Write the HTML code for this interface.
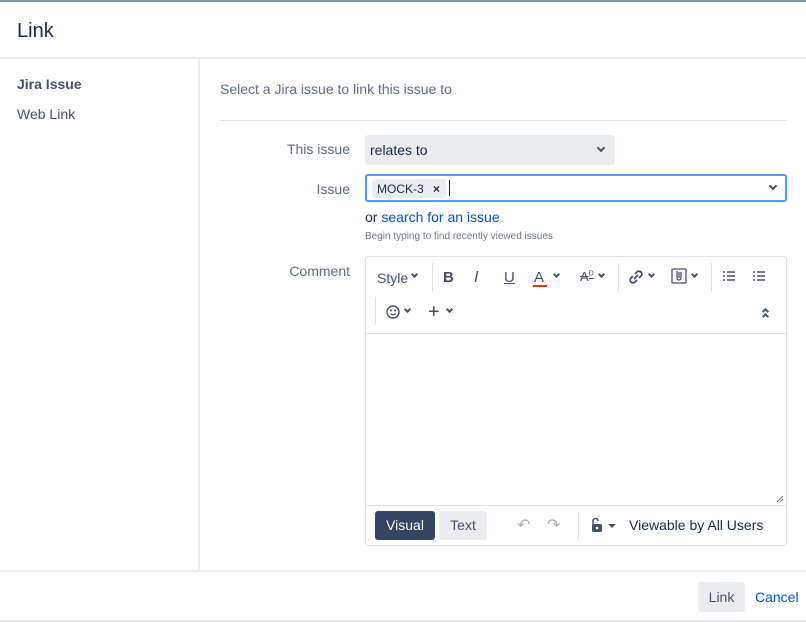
<!DOCTYPE html>
<html><head><meta charset="utf-8"><style>
*{box-sizing:border-box;margin:0;padding:0}
body{width:806px;height:622px;position:relative;background:#fff;font-family:"Liberation Sans",sans-serif;color:#172b4d;overflow:hidden}
.a{position:absolute}
.lbl{font-size:14px;color:#5e6c84;text-align:right;width:120px}
.ic{position:absolute;font-size:14px;color:#42526e;font-weight:bold}
.chev{display:inline-block;width:6px;height:6px;border-right:2px solid #42526e;border-bottom:2px solid #42526e;transform:rotate(45deg)}
</style></head><body>
<div class="a" style="left:0;top:0;width:806px;height:2px;background:#8993a4"></div>
<div class="a" style="left:17px;top:20px;font-size:20px;color:#172b4d">Link</div>
<div class="a" style="left:0;top:57px;width:806px;height:2px;background:#ebecf0"></div>
<div class="a" style="left:198px;top:59px;width:2px;height:512px;background:#ebecf0"></div>
<div class="a" style="left:17px;top:76px;font-size:14px;font-weight:bold;color:#42526e">Jira Issue</div>
<div class="a" style="left:17px;top:106px;font-size:14px;color:#42526e">Web Link</div>
<div class="a" style="left:220px;top:81px;font-size:14px;color:#5e6c84">Select a Jira issue to link this issue to</div>
<div class="a" style="left:220px;top:120px;width:567px;height:1px;background:#dfe1e6"></div>
<div class="a lbl" style="left:230px;top:141px">This issue</div>
<div class="a" style="left:365px;top:135px;width:250px;height:30px;background:#ebecf0;border-radius:3px;font-size:14px;padding:7px 5px">relates to<span class="chev" style="position:absolute;right:11px;top:10px"></span></div>
<div class="a lbl" style="left:230px;top:181px">Issue</div>
<div class="a" style="left:365px;top:174px;width:422px;height:28px;border:2px solid #4c9aff;border-radius:3px">
<div class="a" style="left:5px;top:3px;width:74px;height:19px;background:#ebecf0;border-radius:3px;font-size:12px;padding:3px 5px">MOCK-3 <span style="margin-left:6px;font-weight:bold">×</span></div>
<div class="a" style="left:82px;top:4px;width:1px;height:16px;background:#172b4d"></div>
<span class="chev" style="position:absolute;right:9px;top:7px"></span>
</div>
<div class="a" style="left:365px;top:209px;font-size:14px">or <span style="color:#0052cc">search for an issue</span></div>
<div class="a" style="left:365px;top:231px;font-size:10px;color:#6b778c">Begin typing to find recently viewed issues</div>
<div class="a lbl" style="left:230px;top:263px">Comment</div>
<div class="a" style="left:365px;top:256px;width:422px;height:290px;border:1px solid #dfe1e6;border-radius:3px">
<div class="a" style="left:0;top:76px;width:420px;height:1px;background:#dfe1e6"></div>
<div class="a" style="left:0;top:248px;width:420px;height:1px;background:#dfe1e6"></div>
<svg class="a" style="left:410px;top:238px" width="8" height="8"><path d="M1 7L7 1M4 7L7 4" stroke="#6b778c" stroke-width="1"/></svg>
<div class="a" style="left:11px;top:13px;font-size:14px;color:#42526e">Style</div><span class="chev a" style="left:46px;top:15px;width:5px;height:5px"></span>
<div class="a" style="left:66px;top:6px;width:1px;height:28px;background:#dfe1e6"></div>
<div class="ic" style="left:77px;top:12px;font-size:15px">B</div>
<div class="ic" style="left:108px;top:12px;font-style:italic;font-weight:normal;font-size:16px">I</div>
<div class="ic" style="left:138px;top:12px;text-decoration:underline;font-weight:normal;font-size:15px">U</div>
<div class="ic" style="left:168px;top:12px;font-weight:normal;font-size:15px">A</div><div class="a" style="left:167px;top:28px;width:14px;height:2px;background:#de350b"></div><span class="chev a" style="left:188px;top:15px;width:5px;height:5px"></span>
<div class="ic" style="left:214px;top:12px;font-weight:normal;font-size:13px;text-decoration:line-through">A<sup style="font-size:7px">D</sup></div><span class="chev a" style="left:233px;top:15px;width:5px;height:5px"></span>
<div class="a" style="left:252px;top:6px;width:1px;height:28px;background:#dfe1e6"></div>
<svg class="a" style="left:262px;top:13px" width="16" height="14" viewBox="0 0 16 14"><path d="M6 9l4-4M5 6L3 8a2.5 2.5 0 0 0 4 4l2-2M11 8l2-2a2.5 2.5 0 0 0-4-4L7 4" stroke="#42526e" stroke-width="1.8" fill="none"/></svg><span class="chev a" style="left:283px;top:15px;width:5px;height:5px"></span>
<svg class="a" style="left:305px;top:11px" width="16" height="16" viewBox="0 0 16 16"><rect x="1" y="1" width="14" height="14" rx="1" stroke="#42526e" fill="none" stroke-width="1.3"/><path d="M6 3v7a2 2 0 0 0 4 0V4M8 4v6" stroke="#42526e" fill="none" stroke-width="1.3"/></svg><span class="chev a" style="left:326px;top:15px;width:5px;height:5px"></span>
<div class="a" style="left:345px;top:6px;width:1px;height:28px;background:#dfe1e6"></div>
<svg class="a" style="left:356px;top:14px" width="14" height="11"><path d="M1 1h2M5 1h8M1 5h2M5 5h8M1 9h2M5 9h8" stroke="#42526e" stroke-width="1.6"/></svg>
<svg class="a" style="left:386px;top:14px" width="14" height="11"><path d="M1 1h2M5 1h8M1 5h2M5 5h8M1 9h2M5 9h8" stroke="#42526e" stroke-width="1.6"/></svg>
<div class="a" style="left:9px;top:40px;width:1px;height:28px;background:#dfe1e6"></div>
<svg class="a" style="left:20px;top:48px" width="14" height="14"><circle cx="7" cy="7" r="6" stroke="#42526e" fill="none" stroke-width="1.4"/><circle cx="5" cy="5.5" r="1" fill="#42526e"/><circle cx="9" cy="5.5" r="1" fill="#42526e"/><path d="M4.5 8.5q2.5 2.5 5 0" stroke="#42526e" fill="none" stroke-width="1.2"/></svg><span class="chev a" style="left:39px;top:50px;width:5px;height:5px"></span>
<div class="ic" style="left:62px;top:44px;font-size:20px;font-weight:normal">+</div><span class="chev a" style="left:81px;top:50px;width:5px;height:5px"></span>
<span class="a" style="left:397px;top:52px;width:5px;height:5px;border-left:2px solid #42526e;border-top:2px solid #42526e;transform:rotate(45deg)"></span>
<span class="a" style="left:397px;top:57px;width:5px;height:5px;border-left:2px solid #42526e;border-top:2px solid #42526e;transform:rotate(45deg)"></span>
<div class="a" style="left:9px;top:254px;width:60px;height:29px;background:#344563;border-radius:3px;color:#fff;font-size:14px;text-align:center;line-height:29px">Visual</div>
<div class="a" style="left:73px;top:254px;width:48px;height:29px;background:#ebecf0;border-radius:3px;color:#42526e;font-size:14px;text-align:center;line-height:29px">Text</div>
<div class="a" style="left:151px;top:258px;color:#a5adba;font-size:16px">↶</div>
<div class="a" style="left:181px;top:258px;color:#a5adba;font-size:16px">↷</div>
<div class="a" style="left:212px;top:254px;width:1px;height:29px;background:#dfe1e6"></div>
<svg class="a" style="left:224px;top:260px" width="14" height="16"><path d="M3 7V4a2.5 2.5 0 0 1 5 0" stroke="#42526e" fill="none" stroke-width="1.6"/><rect x="2" y="7" width="10" height="8" rx="1.5" fill="#42526e"/><circle cx="7" cy="11" r="1.3" fill="#fff"/></svg>
<div class="a" style="left:242px;top:267px;border:4px solid transparent;border-top:4px solid #42526e"></div>
<div class="a" style="left:263px;top:260px;font-size:14px">Viewable by All Users</div>
</div>
<div class="a" style="left:0;top:570px;width:806px;height:2px;background:#ebecf0"></div>
<div class="a" style="left:698px;top:582px;width:47px;height:30px;background:#ebecf0;border-radius:3px;font-size:14px;color:#42526e;text-align:center;line-height:30px">Link</div>
<div class="a" style="left:755px;top:589px;font-size:14px;color:#0052cc">Cancel</div>
<div class="a" style="left:0;top:620px;width:806px;height:2px;background:#ebecf0"></div>
</body></html>
